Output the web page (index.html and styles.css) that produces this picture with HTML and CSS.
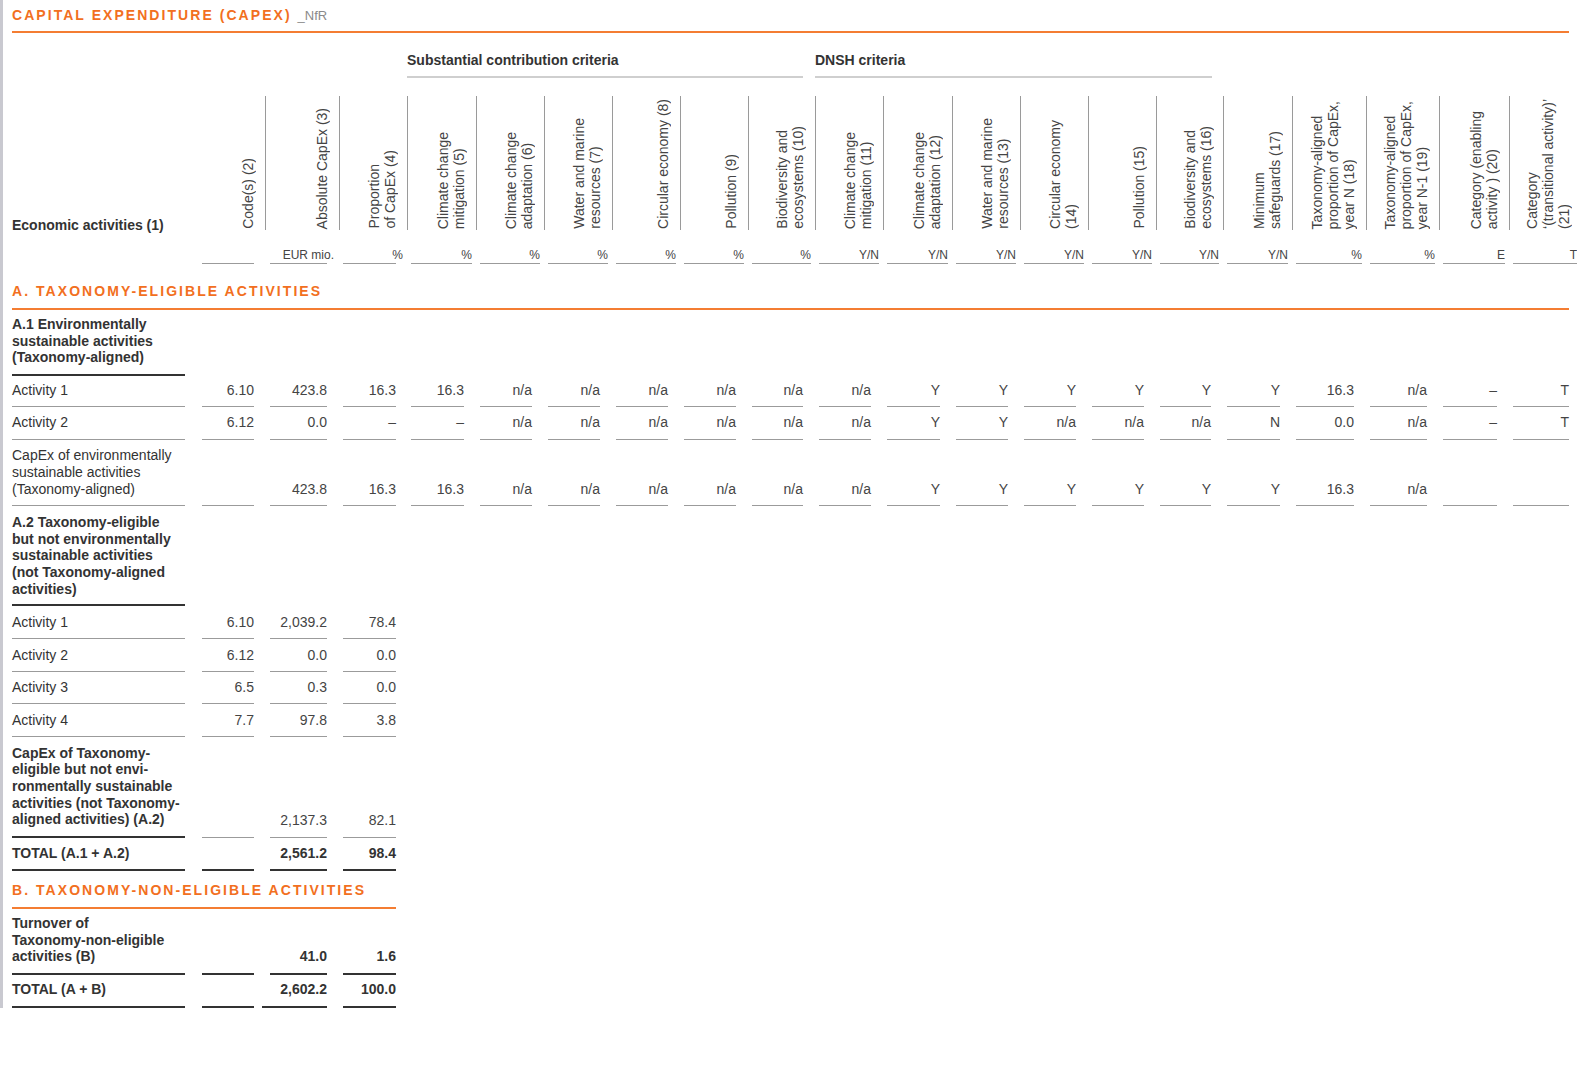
FILE: index.html
```html
<!DOCTYPE html>
<html lang="en">
<head>
<meta charset="utf-8">
<title>Capital Expenditure (CapEx)</title>
<link rel="stylesheet" href="styles.css">
</head>
<body>
<div class="page">
  <h1 class="title">CAPITAL EXPENDITURE (CAPEX) <span class="nfr">_NfR</span></h1>

  <div class="grid groups">
    <div class="group g-sc">Substantial contribution criteria</div>
    <div class="group g-dnsh">DNSH criteria</div>
  </div>

  <div class="grid heads">
    <div class="h-econ">Economic activities (1)</div>
    <div class="vh nol"><span>Code(s) (2)</span></div>
    <div class="vh"><span>Absolute CapEx (3)</span></div>
    <div class="vh"><span>Proportion<br>of CapEx (4)</span></div>
    <div class="vh"><span>Climate change<br>mitigation (5)</span></div>
    <div class="vh"><span>Climate change<br>adaptation (6)</span></div>
    <div class="vh"><span>Water and marine<br>resources (7)</span></div>
    <div class="vh"><span>Circular economy (8)</span></div>
    <div class="vh"><span>Pollution (9)</span></div>
    <div class="vh"><span>Biodiversity and<br>ecosystems (10)</span></div>
    <div class="vh"><span>Climate change<br>mitigation (11)</span></div>
    <div class="vh"><span>Climate change<br>adaptation (12)</span></div>
    <div class="vh"><span>Water and marine<br>resources (13)</span></div>
    <div class="vh"><span>Circular economy<br>(14)</span></div>
    <div class="vh"><span>Pollution (15)</span></div>
    <div class="vh"><span>Biodiversity and<br>ecosystems (16)</span></div>
    <div class="vh"><span>Minimum<br>safeguards (17)</span></div>
    <div class="vh"><span>Taxonomy-aligned<br>proportion of CapEx,<br>year N (18)</span></div>
    <div class="vh"><span>Taxonomy-aligned<br>proportion of CapEx,<br>year N-1 (19)</span></div>
    <div class="vh"><span>Category (enabling<br>activity ) (20)</span></div>
    <div class="vh"><span>Category<br>‘(transitional activity)’<br>(21)</span></div>
  </div>

  <div class="grid units">
    <div class="u-empty"></div>
    <div class="u"></div>
    <div class="u"><span>EUR mio.</span></div>
    <div class="u"><span>%</span></div>
    <div class="u">%</div>
    <div class="u">%</div>
    <div class="u">%</div>
    <div class="u">%</div>
    <div class="u">%</div>
    <div class="u">%</div>
    <div class="u">Y/N</div>
    <div class="u">Y/N</div>
    <div class="u">Y/N</div>
    <div class="u">Y/N</div>
    <div class="u">Y/N</div>
    <div class="u">Y/N</div>
    <div class="u">Y/N</div>
    <div class="u">%</div>
    <div class="u">%</div>
    <div class="u">E</div>
    <div class="u">T</div>
  </div>

  <h2 class="section">A. TAXONOMY-ELIGIBLE ACTIVITIES</h2>

  <div class="grid row hd hd-a1">
    <div class="lbl">A.1 Environmentally<br>sustainable activities<br>(Taxonomy-aligned)</div>
  </div>

  <div class="grid row first">
    <div class="lbl">Activity 1</div>
    <div class="c">6.10</div><div class="c">423.8</div><div class="c">16.3</div>
    <div class="c">16.3</div><div class="c">n/a</div><div class="c">n/a</div><div class="c">n/a</div><div class="c">n/a</div><div class="c">n/a</div>
    <div class="c">n/a</div><div class="c">Y</div><div class="c">Y</div><div class="c">Y</div><div class="c">Y</div><div class="c">Y</div>
    <div class="c">Y</div><div class="c">16.3</div><div class="c">n/a</div><div class="c">–</div><div class="c">T</div>
  </div>

  <div class="grid row">
    <div class="lbl">Activity 2</div>
    <div class="c">6.12</div><div class="c">0.0</div><div class="c">–</div>
    <div class="c">–</div><div class="c">n/a</div><div class="c">n/a</div><div class="c">n/a</div><div class="c">n/a</div><div class="c">n/a</div>
    <div class="c">n/a</div><div class="c">Y</div><div class="c">Y</div><div class="c">n/a</div><div class="c">n/a</div><div class="c">n/a</div>
    <div class="c">N</div><div class="c">0.0</div><div class="c">n/a</div><div class="c">–</div><div class="c">T</div>
  </div>

  <div class="grid row">
    <div class="lbl">CapEx of environmentally<br>sustainable activities<br>(Taxonomy-aligned)</div>
    <div class="c"></div><div class="c">423.8</div><div class="c">16.3</div>
    <div class="c">16.3</div><div class="c">n/a</div><div class="c">n/a</div><div class="c">n/a</div><div class="c">n/a</div><div class="c">n/a</div>
    <div class="c">n/a</div><div class="c">Y</div><div class="c">Y</div><div class="c">Y</div><div class="c">Y</div><div class="c">Y</div>
    <div class="c">Y</div><div class="c">16.3</div><div class="c">n/a</div><div class="c"></div><div class="c"></div>
  </div>

  <div class="grid row hd hd-a2">
    <div class="lbl">A.2 Taxonomy-eligible<br>but not environmentally<br>sustainable activities<br>(not Taxonomy-aligned<br>activities)</div>
  </div>

  <div class="grid row">
    <div class="lbl">Activity 1</div>
    <div class="c">6.10</div><div class="c">2,039.2</div><div class="c">78.4</div>
  </div>
  <div class="grid row">
    <div class="lbl">Activity 2</div>
    <div class="c">6.12</div><div class="c">0.0</div><div class="c">0.0</div>
  </div>
  <div class="grid row">
    <div class="lbl">Activity 3</div>
    <div class="c">6.5</div><div class="c">0.3</div><div class="c">0.0</div>
  </div>
  <div class="grid row">
    <div class="lbl">Activity 4</div>
    <div class="c">7.7</div><div class="c">97.8</div><div class="c">3.8</div>
  </div>

  <div class="grid row sub">
    <div class="lbl">CapEx of Taxonomy-<br>eligible but not envi-<br>ronmentally sustainable<br>activities (not Taxonomy-<br>aligned activities) (A.2)</div>
    <div class="c"></div><div class="c">2,137.3</div><div class="c">82.1</div>
  </div>

  <div class="grid row total">
    <div class="lbl">TOTAL (A.1 + A.2)</div>
    <div class="c"></div><div class="c">2,561.2</div><div class="c">98.4</div>
  </div>

  <h2 class="section section-b">B. TAXONOMY-NON-ELIGIBLE ACTIVITIES</h2>

  <div class="grid row total turnover">
    <div class="lbl">Turnover of<br>Taxonomy-non-eligible<br>activities (B)</div>
    <div class="c"></div><div class="c">41.0</div><div class="c">1.6</div>
  </div>

  <div class="grid row total grand">
    <div class="lbl">TOTAL (A + B)</div>
    <div class="c"></div><div class="c wide">2,602.2</div><div class="c">100.0</div>
  </div>
</div>
</body>
</html>
```

FILE: styles.css
```css
html {
  overflow-x: hidden;
}

body {
  margin: 0;
  background: #ffffff;
  font-family: "Liberation Sans", Arial, Helvetica, sans-serif;
  font-size: 14px;
  color: #333333;
}

.page {
  margin-right: 8px;
  border-left: 3px solid #c9c9d0;
  padding-left: 9px;
}

/* ---------- Titles ---------- */
.title {
  margin: 0;
  padding: 7px 0;
  line-height: 17px;
  font-size: 14px;
  font-weight: bold;
  letter-spacing: 2.05px;
  color: #f26f21;
  border-bottom: 2px solid #f47d32;
}

.nfr {
  font-size: 13px;
  font-weight: normal;
  letter-spacing: 0;
  color: #8a8a8a;
}

.section {
  margin: 19.3px 0 0;
  padding-bottom: 8px;
  line-height: 17px;
  font-size: 14px;
  font-weight: bold;
  letter-spacing: 2.05px;
  color: #f26f21;
  border-bottom: 2px solid #f47d32;
}

.section-b {
  width: 384px;
  margin-top: 11px;
  padding-bottom: 7.5px;
}

/* ---------- Grid ---------- */
.grid {
  display: grid;
  grid-template-columns: 186px 67px 74px 68px 69px 68px 68px 68px 68px 67px 68px 69px 68px 68px 68px 67px 69px 74px 73px 70px 72px;
  width: 1569px;
}

/* group header */
.groups {
  margin-top: 18.6px;
}

.group {
  font-weight: bold;
  line-height: 17px;
  padding-bottom: 7px;
  border-bottom: 2px solid #cfcfcf;
  color: #333;
}

.g-sc {
  grid-column: 5 / 11;
  margin-right: 12px;
}

.g-dnsh {
  grid-column: 11 / 17;
  margin-right: 11px;
}

/* column headers */
.heads {
  margin-top: 18.4px;
  height: 134px;
}

.h-econ {
  align-self: end;
  font-weight: bold;
  line-height: 17px;
  margin-bottom: -4px;
  color: #333;
}

.vh {
  border-left: 1px solid #9a9a9a;
  display: flex;
  justify-content: flex-end;
  align-items: flex-end;
  padding-right: 9px;
  padding-bottom: 1px;
  color: #444;
}

.vh.nol {
  border-left: none;
}

.vh span {
  writing-mode: vertical-rl;
  text-orientation: sideways;
  transform: rotate(180deg);
  line-height: 16px;
  white-space: nowrap;
}

/* unit row */
.units {
  margin-top: 17px;
}

.u {
  margin: 0 4px;
  border-bottom: 1px solid #9b9b9b;
  text-align: right;
  font-size: 12px;
  line-height: 16px;
  color: #444;
  white-space: nowrap;
}

.units .u:nth-child(2) { margin: 0 11px 0 4px; }
.units .u:nth-child(3) { margin: 0 12px 0 5px; }
.units .u:nth-child(4) { margin: 0 11px 0 4px; }

.units .u span {
  display: inline-block;
  margin-right: -7px;
}

/* ---------- Body rows ---------- */
.lbl {
  margin-right: 13px;
  padding: 7.5px 0;
  line-height: 16.7px;
  border-bottom: 1px solid #9b9b9b;
  white-space: nowrap;
  color: #333;
}

.c {
  margin: 0 12px 0 4px;
  padding: 7.5px 0;
  line-height: 16.7px;
  border-bottom: 1px solid #9b9b9b;
  display: flex;
  flex-direction: column;
  justify-content: flex-end;
  text-align: right;
  color: #444;
  white-space: nowrap;
}

.row .c:nth-child(2) { margin-right: 11px; }
.row .c:nth-child(3) { margin-left: 5px; }
.row .c:nth-child(4) { margin-right: 11px; }

.row.first .lbl,
.row.first .c {
  padding-top: 5.5px;
}

/* heading rows */
.hd .lbl {
  font-weight: bold;
  border-bottom: 2px solid #333;
}

.hd-a1 .lbl {
  padding-top: 5.6px;
  padding-bottom: 8.3px;
}

.hd-a2 .lbl {
  padding-top: 8px;
  padding-bottom: 7px;
}

/* subtotal row */
.sub .lbl {
  font-weight: bold;
  border-bottom: 2px solid #333;
}

/* total rows */
.total .lbl,
.total .c {
  font-weight: bold;
  color: #333;
  border-bottom: 2px solid #333;
}

.turnover .lbl,
.turnover .c {
  padding-top: 6px;
  padding-bottom: 8px;
}

.grand .lbl,
.grand .c {
  padding-top: 6.5px;
}

.grand .c.wide {
  margin-left: -3px;
}
```
